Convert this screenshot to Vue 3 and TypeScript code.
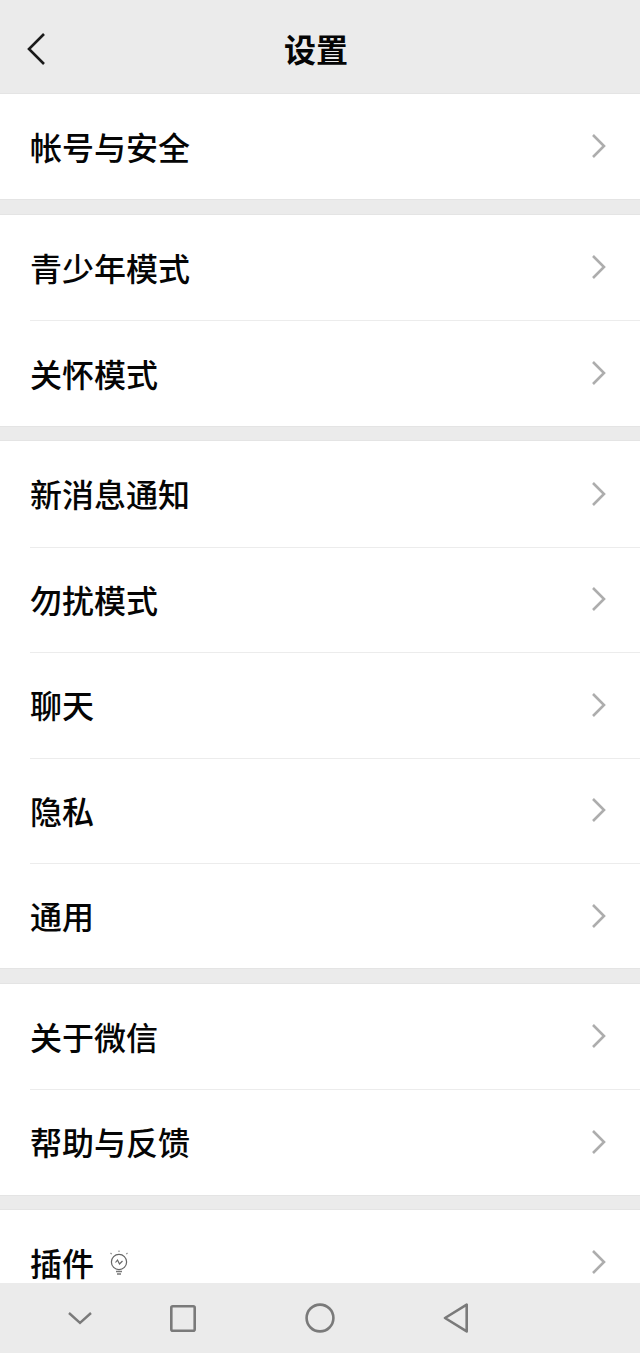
<script setup lang="ts">
// WeChat settings screen. Rows are grouped the way the app splits them,
// the last group is cut off by the phone's navigation bar.
interface Row {
  label: string
  hint?: boolean
}

const groups: Row[][] = [
  [{ label: '帐号与安全' }],
  [{ label: '青少年模式' }, { label: '关怀模式' }],
  [
    { label: '新消息通知' },
    { label: '勿扰模式' },
    { label: '聊天' },
    { label: '隐私' },
    { label: '通用' },
  ],
  [{ label: '关于微信' }, { label: '帮助与反馈' }],
  [{ label: '插件', hint: true }],
]
</script>

<template>
  <div class="screen">
    <header class="head">
      <svg class="back" width="24" height="36" viewBox="0 0 24 36" fill="none">
        <path d="M19 3 L4 18 L19 33" stroke="#1a1a1a" stroke-width="2.6" />
      </svg>
      <span class="title">设置</span>
    </header>

    <main class="list">
      <section v-for="(group, i) in groups" :key="i" class="group">
        <div v-for="row in group" :key="row.label" class="row">
          <div class="row-inner">
            <span class="label">{{ row.label }}</span>
            <svg v-if="row.hint" class="bulb" width="24" height="28" viewBox="0 0 24 28" fill="none">
              <circle cx="12" cy="13" r="7.6" stroke="#666" stroke-width="1.2" />
              <path d="M8.5 13.5 L10.5 11 L12.5 15 L15.5 12" stroke="#666" stroke-width="1.2" />
              <path d="M9 22.5 H15 M10 25 H14" stroke="#777" stroke-width="1.3" />
              <path d="M12 1.5 V3 M3.5 4 L4.7 5.2 M20.5 4 L19.3 5.2" stroke="#888" stroke-width="1.1" />
            </svg>
            <svg class="chevron" width="16" height="26" viewBox="0 0 16 26" fill="none">
              <path d="M2 2 L13 13 L2 24" stroke="#adadad" stroke-width="2.6" />
            </svg>
          </div>
        </div>
      </section>
    </main>

    <nav class="nav">
      <svg width="24" height="16" viewBox="0 0 24 16" fill="none">
        <path d="M1 3 L12 13 L23 3" stroke="#7a7a7a" stroke-width="2.4" />
      </svg>
      <svg class="nav-square" width="26" height="27" viewBox="0 0 26 27" fill="none">
        <rect x="1.3" y="1.3" width="23.4" height="24.4" rx="1.5" stroke="#7a7a7a" stroke-width="2.6" />
      </svg>
      <svg class="nav-circle" width="30" height="30" viewBox="0 0 30 30" fill="none">
        <circle cx="15" cy="15" r="13.4" stroke="#7a7a7a" stroke-width="2.6" />
      </svg>
      <svg class="nav-back" width="26" height="30" viewBox="0 0 26 30" fill="none">
        <path d="M23.7 1.6 V28.4 L2 15 Z" stroke="#7a7a7a" stroke-width="2.6" stroke-linejoin="round" />
      </svg>
    </nav>
  </div>
</template>

<style>
html,
body {
  margin: 0;
  background: #ebebeb;
}
</style>

<style scoped>
.screen {
  width: 640px;
  height: 1353px;
  display: flex;
  flex-direction: column;
  overflow: hidden;
  background: #ebebeb;
  font-family: "Noto Sans CJK SC", "Noto Sans", sans-serif;
  color: #050505;
}

.head {
  position: relative;
  flex: 0 0 94px;
  display: flex;
  align-items: center;
  justify-content: center;
  padding-right: 8px;
  padding-bottom: 3px;
  box-sizing: border-box;
  border-bottom: 1px solid #e4e4e4;
}

.back {
  position: absolute;
  left: 25px;
  top: 31px;
}

.title {
  font-size: 32px;
  font-weight: 700;
  line-height: 40px;
  margin-top: 6px;
}

.list {
  flex: 1 1 0;
  min-height: 0;
  overflow: hidden;
  display: flex;
  flex-direction: column;
  gap: 15.6px;
}

.group {
  flex: none;
  background: #fff;
  box-shadow: 0 0 0 1px #e4e4e4;
}

.row {
  height: 105.4px;
  padding-left: 30px;
  box-sizing: border-box;
}

.row-inner {
  box-sizing: border-box;
  height: 100%;
  display: flex;
  align-items: center;
  padding-right: 33px;
  border-top: 1px solid #ececec;
}

.row:first-child .row-inner {
  border-top: none;
}

.label {
  font-size: 32px;
  font-weight: 500;
  line-height: 38px;
  margin-top: -2px;
}

.bulb {
  margin-left: 13px;
}

.chevron {
  margin-left: auto;
  margin-top: -1px;
}

.nav {
  flex: 0 0 70px;
  box-sizing: border-box;
  display: flex;
  align-items: center;
  background: #ebebeb;
  padding-left: 68px;
}

.nav-square {
  margin-left: 78px;
}

.nav-circle {
  margin-left: 109px;
}

.nav-back {
  margin-left: 108px;
}
</style>
